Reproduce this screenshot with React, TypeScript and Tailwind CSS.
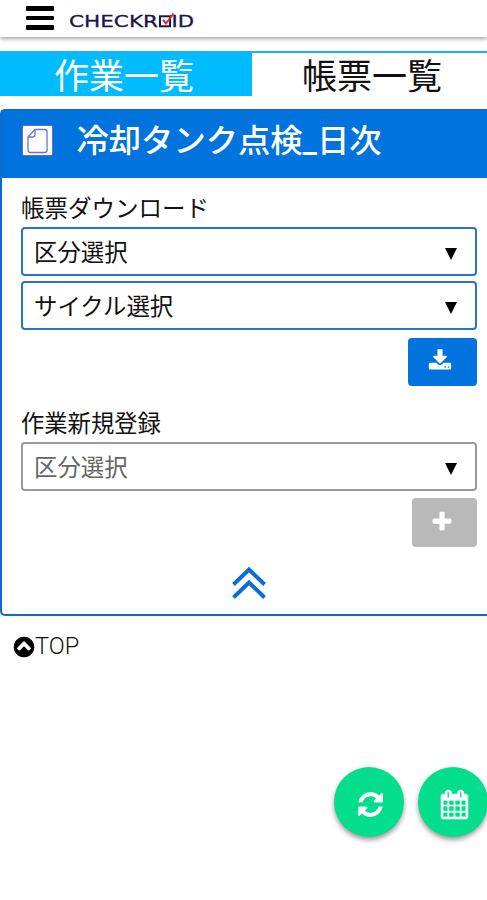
import React from 'react';
import clsx from 'clsx';

const icons = {
  download:
    'M1344 1344q0-26-19-45t-45-19-45 19-19 45 19 45 45 19 45-19 19-45zm256 0q0-26-19-45t-45-19-45 19-19 45 19 45 45 19 45-19 19-45zm128-224v320q0 40-28 68t-68 28h-1472q-40 0-68-28t-28-68v-320q0-40 28-68t68-28h465l135 136q58 56 136 56t136-56l136-136h464q40 0 68 28t28 68zm-325-569q17 41-14 70l-448 448q-18 19-45 19t-45-19l-448-448q-31-29-14-70 17-39 59-39h256v-448q0-26 19-45t45-19h256q26 0 45 19t19 45v448h256q42 0 59 39z',
  plus:
    'M1600 736v192q0 40-28 68t-68 28h-416v416q0 40-28 68t-68 28h-192q-40 0-68-28t-28-68v-416h-416q-40 0-68-28t-28-68v-192q0-40 28-68t68-28h416v-416q0-40 28-68t68-28h192q40 0 68 28t28 68v416h416q40 0 68 28t28 68z',
  circleUp:
    'M1293 1139l102-102q19-19 19-45t-19-45l-454-454q-19-19-45-19t-45 19l-454 454q-19 19-19 45t19 45l102 102q19 19 45 19t45-19l307-307 307 307q19 19 45 19t45-19zm371-243q0 209-103 385.5t-279.5 279.5-385.5 103-385.5-103-279.5-279.5-103-385.5 103-385.5 279.5-279.5 385.5-103 385.5 103 279.5 279.5 103 385.5z',
  refresh:
    'M1639 1056q0 5-1 7-64 268-268 434.5t-478 166.5q-146 0-282.5-55t-243.5-157l-129 129q-19 19-45 19t-45-19-19-45v-448q0-26 19-45t45-19h448q26 0 45 19t19 45-19 45l-137 137q71 66 161 102t187 36q134 0 250-65t186-179q11-17 53-117 8-23 30-23h192q13 0 22.5 9.5t9.5 22.5zm25-800v448q0 26-19 45t-45 19h-448q-26 0-45-19t-19-45 19-45l138-138q-148-137-349-137-134 0-250 65t-186 179q-11 17-53 117-8 23-30 23h-199q-13 0-22.5-9.5t-9.5-22.5v-7q65-268 270-434.5t480-166.5q146 0 284 55.5t245 156.5l130-129q19-19 45-19t45 19 19 45z',
  calendar:
    'M192 1664h288v-288h-288v288zm352 0h320v-288h-320v288zm-352-352h288v-320h-288v320zm352 0h320v-320h-320v320zm-352-384h288v-288h-288v288zm736 736h320v-288h-320v288zm-384-736h320v-288h-320v288zm768 736h288v-288h-288v288zm-384-352h320v-320h-320v320zm-352-864v-288q0-13-9.5-22.5t-22.5-9.5h-64q-13 0-22.5 9.5t-9.5 22.5v288q0 13 9.5 22.5t22.5 9.5h64q13 0 22.5-9.5t9.5-22.5zm736 864h288v-320h-288v320zm-384-384h320v-288h-320v288zm384 0h288v-288h-288v288zm32-480v-288q0-13-9.5-22.5t-22.5-9.5h-64q-13 0-22.5 9.5t-9.5 22.5v288q0 13 9.5 22.5t22.5 9.5h64q13 0 22.5-9.5t9.5-22.5zm384-64v1280q0 52-38 90t-90 38h-1408q-52 0-90-38t-38-90v-1280q0-52 38-90t90-38h128v-96q0-66 47-113t113-47h64q66 0 113 47t47 113v96h384v-96q0-66 47-113t113-47h64q66 0 113 47t47 113v96h128q52 0 90 38t38 90z',
};

const Icon = ({ name, className }: { name: keyof typeof icons; className?: string }) => (
  <svg viewBox="0 0 1792 1792" fill="currentColor" className={clsx('shrink-0 overflow-visible', className)}>
    <path d={icons[name]} />
  </svg>
);

const Logo = () => (
  <svg viewBox="0 0 126 24" className="ml-[15px] h-6 w-[126px] overflow-visible">
    <g fill="#17174f" stroke="#17174f" strokeWidth="0.3" fontFamily="DejaVu Sans" fontSize="16.5">
      <text x="0" y="18.3" textLength="89" lengthAdjust="spacingAndGlyphs">CHECKR</text>
      <text x="102.5" y="18.3" textLength="22.5" lengthAdjust="spacingAndGlyphs">ID</text>
    </g>
    <rect x="91" y="7.3" width="10" height="10" fill="none" stroke="#17174f" strokeWidth="2" />
    <path d="M94 11l3 3.5 7.5-10" fill="none" stroke="#e5252c" strokeWidth="2" />
  </svg>
);

const SelectBox = ({ label, disabled = false }: { label: string; disabled?: boolean }) => (
  <button
    className={clsx(
      'flex w-full h-[49px] items-center justify-between rounded-[4px] border-2 bg-white pl-[11px] pr-[18px] text-[23.4px] leading-none',
      disabled ? 'border-[#999999] text-[#666666]' : 'border-[#2873cf] text-[#111111]'
    )}
  >
    <span className="pt-[5px]">{label}</span>
    <svg viewBox="0 0 12 12" className="w-3 h-3 mt-1 text-black">
      <path d="M0 0h12L6 12z" fill="currentColor" />
    </svg>
  </button>
);

export default function App() {
  return (
    <div className="relative h-[900px] w-[487px] overflow-hidden bg-white font-['Roboto','Noto_Sans_CJK_JP',sans-serif] text-[#111111]">
      {/* Header */}
      <header className="flex h-[37px] items-start pl-[26px] shadow-[0_2px_4px_rgba(0,0,0,0.35)]">
        <div className="mt-[6px] flex flex-col gap-[5px]">
          <span className="h-[4.5px] w-7 rounded-[1px] bg-black" />
          <span className="h-[4.5px] w-7 rounded-[1px] bg-black" />
          <span className="h-[4.5px] w-7 rounded-[1px] bg-black" />
        </div>
        <div className="mt-[9px]">
          <Logo />
        </div>
      </header>

      {/* Tabs */}
      <nav className="mt-[14px] flex h-[45px] border-t-[2px] border-[#1ab2f5] text-[35px] leading-[49px]">
        <div className="h-[43px] w-[252px] bg-[#00bcff] pr-1 text-center text-white">作業一覧</div>
        <div className="h-[43px] flex-1 pl-[5px] text-center">帳票一覧</div>
      </nav>

      {/* Inspection card */}
      <section className="mt-[13px] h-[507px] rounded-l-[5px] border-2 border-r-0 border-[#1069d0] bg-white">
        <div className="-mt-px flex h-[68px] items-center bg-[#0074dc] pl-5 text-white">
          <svg viewBox="0 0 31 31" className="-mt-[7px] h-[31px] w-[31px]">
            <rect x="0.5" y="0.5" width="30" height="30" rx="1.5" fill="#fafaff" stroke="#7568bb" />
            <path d="M13 4.5h9.5a2.5 2.5 0 012.5 2.5v18a2.5 2.5 0 01-2.5 2.5h-14a2.5 2.5 0 01-2.5-2.5V12z" fill="#fff" stroke="#6879bb" strokeWidth="1.3" />
            <path d="M13 4.5v5a2.5 2.5 0 01-2.5 2.5h-4.5" fill="none" stroke="#6879bb" strokeWidth="1.3" />
          </svg>
          <h1 className="-mt-[6px] ml-[23.5px] text-[32.3px] font-medium leading-none">冷却タンク点検_日次</h1>
        </div>

        <div className="pl-[19px] pr-[10px]">
          <p className="pt-[19px] text-[23.5px] leading-[25px]">帳票ダウンロード</p>
          <div className="mt-[5px] flex flex-col gap-[5px]">
            <SelectBox label="区分選択" />
            <SelectBox label="サイクル選択" />
          </div>
          <div className="mt-2 flex justify-end">
            <button className="flex h-[48px] w-[69px] items-center justify-center rounded-[4px] bg-[#0074dc] pr-[5px] text-white">
              <Icon name="download" className="-mt-[3px] h-6 w-6" />
            </button>
          </div>

          <p className="mt-[26px] text-[23.3px] leading-[25px]">作業新規登録</p>
          <div className="mt-[5px]">
            <SelectBox label="区分選択" disabled />
          </div>
          <div className="mt-[7px] flex justify-end">
            <button className="flex h-[49px] w-[65px] items-center justify-center rounded-[4px] bg-[#b9b9b9] pr-[5px] text-white">
              <Icon name="plus" className="-mt-[2px] h-6 w-6" />
            </button>
          </div>
        </div>

        <div className="mt-[19px] flex justify-center pl-[9px]">
          <svg viewBox="0 0 34 34" className="h-[34px] w-[34px]" fill="none" stroke="#0b6ed6" strokeWidth="4">
            <path d="M1.5 18.5L17 3.5l15.5 15M1.5 31.5L17 16.5l15.5 15" />
          </svg>
        </div>
      </section>

      {/* Back to top */}
      <a className="ml-[12px] mt-[17px] flex h-7 items-center text-[23.5px] font-light leading-none">
        <Icon name="circleUp" className="h-[24px] w-[24px] text-black" />
        <span className="-ml-px">TOP</span>
      </a>

      {/* Floating actions */}
      <div className="absolute left-[334px] top-[767px] flex gap-[14px] text-white">
        <button className="flex h-[70px] w-[70px] shrink-0 items-center justify-center rounded-full bg-[#03de8c] shadow-[0_3px_5px_rgba(0,0,0,0.4)]">
          <Icon name="refresh" className="ml-[2px] mt-[5px] h-[29px] w-[29px]" />
        </button>
        <button className="flex h-[70px] w-[70px] shrink-0 items-center justify-center rounded-full bg-[#03de8c] shadow-[0_3px_5px_rgba(0,0,0,0.4)]">
          <Icon name="calendar" className="ml-[3px] mt-[5px] h-[29px] w-[29px] stroke-current [stroke-width:35]" />
        </button>
      </div>
    </div>
  );
}
